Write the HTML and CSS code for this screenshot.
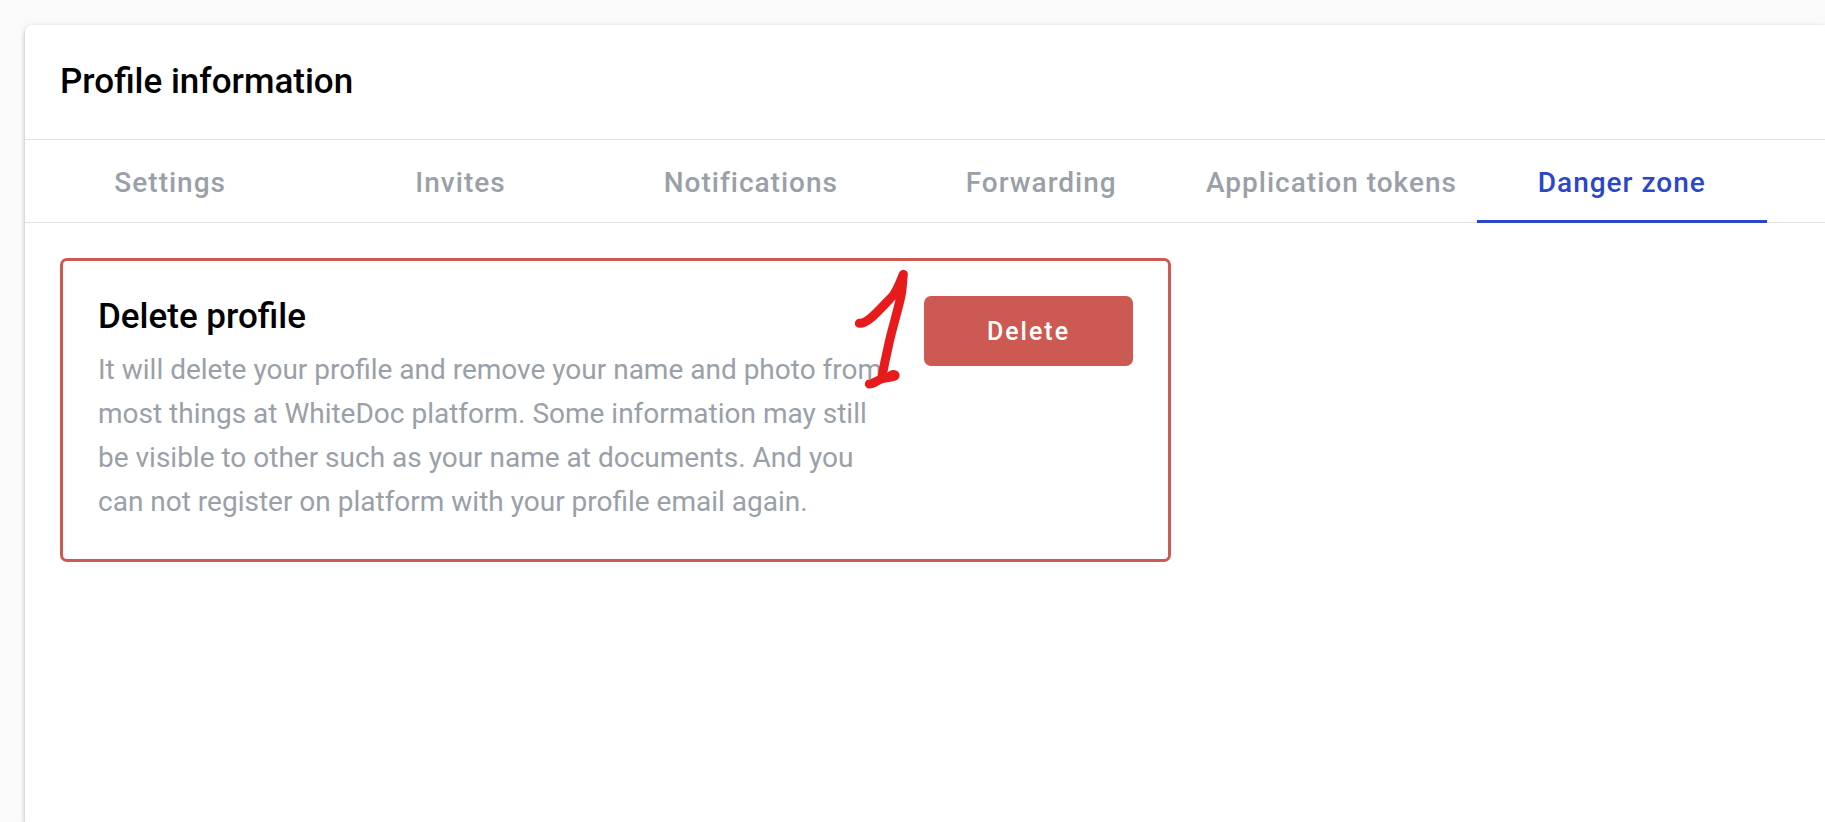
FILE: index.html
```html
<!DOCTYPE html>
<html lang="en">
<head>
  <meta charset="utf-8">
  <meta name="viewport" content="width=device-width, initial-scale=1">
  <title>Profile information</title>
  <link rel="stylesheet" href="styles.css">
</head>
<body>
  <main class="card">
    <header class="card-header">
      <h1 class="heading">Profile information</h1>
    </header>
    <nav class="tabs">
      <div class="tab-list">
        <a class="tab" href="#settings">Settings</a>
        <a class="tab" href="#invites">Invites</a>
        <a class="tab" href="#notifications">Notifications</a>
        <a class="tab" href="#forwarding">Forwarding</a>
        <a class="tab" href="#tokens">Application tokens</a>
        <a class="tab tab-active" href="#danger" aria-current="page">Danger zone</a>
      </div>
    </nav>
    <div class="card-body">
      <section class="danger-box">
        <div class="danger-text">
          <h2 class="heading">Delete profile</h2>
          <p class="description">It will delete your profile and remove your name and photo from most things at WhiteDoc platform. Some information may still be visible to other such as your name at documents. And you can not register on platform with your profile email again.</p>
        </div>
        <button class="delete-button" type="button">Delete</button>
        <svg class="step-mark" viewBox="60 80 180 372" aria-hidden="true">
          <path d="M88 249C112 251 140 217 188 167C202 149 209 128 220 102C217 124 218 145 212 171C200 225 183 275 174 322C167 355 160 380 156 414"/>
          <path d="M118 431C133 431 143 417 160 414C177 411 199 409 195 404C192 401 184 402 178 410"/>
        </svg>
      </section>
    </div>
  </main>
</body>
</html>
```

FILE: styles.css
```css
* {
  box-sizing: border-box;
}

body {
  margin: 0;
  min-height: 100vh;
  padding: 25px 0 0 25px;
  display: flex;
  flex-direction: column;
  background: #fafafa;
  color: #000;
  font-family: Roboto, "Liberation Sans", sans-serif;
}

.card {
  flex: 1;
  background: #fff;
  border-radius: 7px 0 0 0;
  box-shadow: 0 2px 5px rgba(0, 0, 0, 0.3);
}

.card-header {
  padding: 36px 35px;
  border-bottom: 1px solid #e0e0e0;
}

.heading {
  margin: 0;
  font-size: 35px;
  font-weight: 500;
  line-height: 42px;
}

.tabs {
  border-bottom: 1px solid #e0e0e0;
}

.tab-list {
  display: flex;
  max-width: 1742px;
  margin-bottom: -1px;
}

.tab {
  flex: 1 1 0;
  padding: 21px 0 16px;
  border-bottom: 3px solid transparent;
  color: #9aa0a8;
  font-size: 28px;
  font-weight: 500;
  line-height: 43px;
  letter-spacing: 1px;
  text-align: center;
  text-decoration: none;
  white-space: nowrap;
}

.tab-active {
  border-bottom-color: #2b46c8;
  color: #2b46c8;
}

.card-body {
  padding: 35px;
}

.danger-box {
  position: relative;
  display: flex;
  align-items: flex-start;
  gap: 35px;
  max-width: 1111px;
  padding: 35px;
  border: 3px solid #cd5953;
  border-radius: 7px;
}

.danger-text {
  flex: 1;
}

.description {
  margin: 10px 0 0;
  color: #9aa0a8;
  font-size: 28px;
  line-height: 44px;
}

.delete-button {
  min-width: 209px;
  height: 70px;
  padding: 0 35px;
  border: 0;
  border-radius: 7px;
  background: #cd5953;
  color: #fff;
  font: inherit;
  font-size: 25px;
  font-weight: 500;
  letter-spacing: 2px;
}

.step-mark {
  position: absolute;
  top: 6px;
  right: 258px;
  width: 60px;
  height: 124px;
  fill: none;
  stroke: #e71b1b;
  stroke-width: 27;
  stroke-linecap: round;
  stroke-linejoin: round;
}
```
